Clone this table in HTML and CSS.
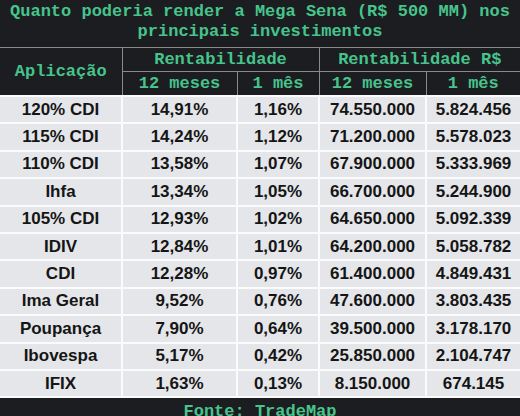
FILE: index.html
```html
<!DOCTYPE html>
<html lang="pt-BR">
<head>
<meta charset="utf-8">
<title>Mega Sena</title>
<link rel="stylesheet" href="styles.css">
</head>
<body>
<div class="card">
  <h1 class="title">Quanto poderia render a Mega Sena (R$ 500 MM) nos principais investimentos</h1>
  <table class="grid">
    <colgroup>
      <col class="c1"><col class="c2"><col class="c3"><col class="c4"><col class="c5">
    </colgroup>
    <thead>
      <tr class="h1row">
        <th rowspan="2">Aplicação</th>
        <th colspan="2">Rentabilidade</th>
        <th colspan="2">Rentabilidade R$</th>
      </tr>
      <tr class="h2row">
        <th>12 meses</th><th>1 mês</th><th>12 meses</th><th>1 mês</th>
      </tr>
    </thead>
    <tbody>
      <tr><td>120% CDI</td><td>14,91%</td><td>1,16%</td><td>74.550.000</td><td>5.824.456</td></tr>
      <tr><td>115% CDI</td><td>14,24%</td><td>1,12%</td><td>71.200.000</td><td>5.578.023</td></tr>
      <tr><td>110% CDI</td><td>13,58%</td><td>1,07%</td><td>67.900.000</td><td>5.333.969</td></tr>
      <tr><td>Ihfa</td><td>13,34%</td><td>1,05%</td><td>66.700.000</td><td>5.244.900</td></tr>
      <tr><td>105% CDI</td><td>12,93%</td><td>1,02%</td><td>64.650.000</td><td>5.092.339</td></tr>
      <tr><td>IDIV</td><td>12,84%</td><td>1,01%</td><td>64.200.000</td><td>5.058.782</td></tr>
      <tr><td>CDI</td><td>12,28%</td><td>0,97%</td><td>61.400.000</td><td>4.849.431</td></tr>
      <tr><td>Ima Geral</td><td>9,52%</td><td>0,76%</td><td>47.600.000</td><td>3.803.435</td></tr>
      <tr><td>Poupança</td><td>7,90%</td><td>0,64%</td><td>39.500.000</td><td>3.178.170</td></tr>
      <tr><td>Ibovespa</td><td>5,17%</td><td>0,42%</td><td>25.850.000</td><td>2.104.747</td></tr>
      <tr><td>IFIX</td><td>1,63%</td><td>0,13%</td><td>8.150.000</td><td>674.145</td></tr>
    </tbody>
  </table>
  <p class="source">Fonte: TradeMap</p>
</div>
</body>
</html>
```
FILE: styles.css
```css
html, body {
  margin: 0;
  padding: 0;
  background: #1c1d20;
}
.card {
  width: 520px;
  height: 416px;
  overflow: hidden;
  background: #1c1d20;
}
.title {
  margin: 0;
  padding: 2px 4px 0 4px;
  height: 47px;
  box-sizing: border-box;
  font-family: "Liberation Mono", "Courier New", monospace;
  font-weight: bold;
  font-size: 17px;
  line-height: 20px;
  color: #46c48c;
  text-align: center;
}
.grid {
  width: 520px;
  border-collapse: collapse;
  table-layout: fixed;
}
.c1 { width: 122px; }
.c2 { width: 115px; }
.c3 { width: 82px; }
.c4 { width: 107px; }
.c5 { width: 94px; }
.grid th {
  font-family: "Liberation Mono", "Courier New", monospace;
  font-weight: bold;
  font-size: 17px;
  color: #46c48c;
  border: 1px solid #8a8a8a;
  padding: 0;
  text-align: center;
}
.grid tr.h1row th { height: 23px; }
.grid tr.h2row th { height: 23px; }
.grid tr > th:first-child { border-left: none; }
.grid tr > th:last-child { border-right: none; }
.grid td {
  font-family: "Liberation Sans", Arial, sans-serif;
  font-weight: bold;
  font-size: 17px;
  color: #151515;
  background: #e4e6e9;
  border: 2px solid #fbfbfb;
  padding: 0;
  height: 25.4px;
  text-align: center;
}
.grid tbody tr > td:first-child { border-left: none; }
.grid tbody tr > td:last-child { border-right: none; }
.source {
  margin: 0;
  padding-top: 4px;
  font-family: "Liberation Mono", "Courier New", monospace;
  font-weight: bold;
  font-size: 17px;
  line-height: 20px;
  color: #46c48c;
  text-align: center;
}
```
